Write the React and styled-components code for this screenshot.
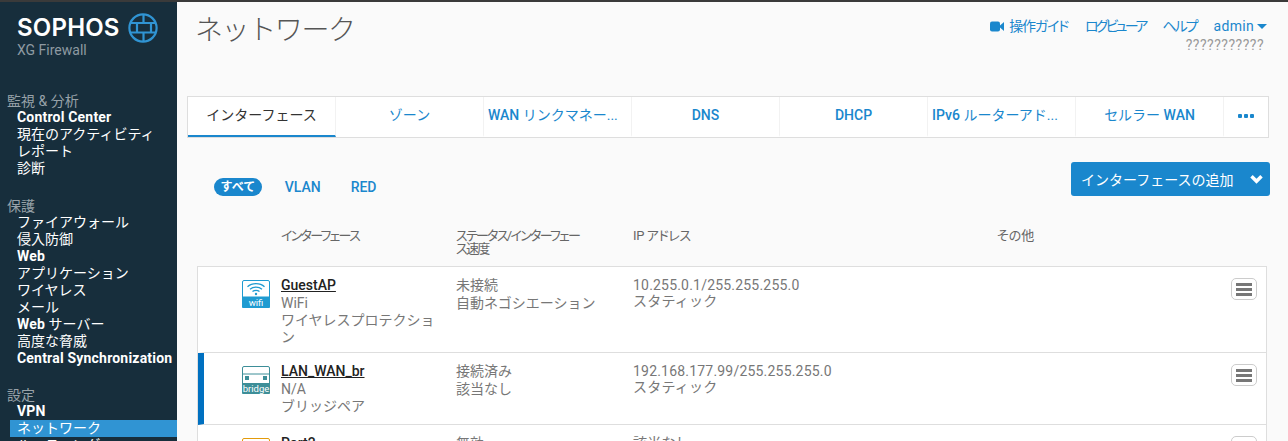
import styled, { createGlobalStyle } from "styled-components";

const sansJa = `Roboto, "Noto Sans CJK JP", sans-serif`;

const sideGroups = [
  {
    title: "監視 & 分析",
    items: [["Control Center"], ["", "現在のアクティビティ"], ["", "レポート"], ["", "診断"]],
  },
  {
    title: "保護",
    items: [["", "ファイアウォール"], ["", "侵入防御"], ["Web"], ["", "アプリケーション"], ["", "ワイヤレス"], ["", "メール"], ["Web", " サーバー"], ["", "高度な脅威"], ["Central Synchronization"]],
  },
  {
    title: "設定",
    items: [["VPN"], ["", "ネットワーク"], ["", "ルーティング"]],
  },
];

const tabs = [
  { rest: "インターフェース" },
  { rest: "ゾーン" },
  { latin: "WAN", rest: " リンクマネー...", clipped: true },
  { latin: "DNS" },
  { latin: "DHCP" },
  { latin: "IPv6", rest: " ルーターアド...", clipped: true },
  { rest: "セルラー ", tail: "WAN" },
];

const topLinks = [
  { label: "ログビューア", spacing: -2.8 },
  { label: "ヘルプ", spacing: -2 },
];

const rows = [
  {
    name: "GuestAP",
    kind: "wifi",
    info: ["WiFi", "ワイヤレスプロテクション"],
    status: ["未接続", "自動ネゴシエーション"],
    ip: ["10.255.0.1/255.255.255.0", "スタティック"],
    height: 86,
  },
  {
    name: "LAN_WAN_br",
    kind: "bridge",
    active: true,
    info: ["N/A", "ブリッジペア"],
    status: ["接続済み", "該当なし"],
    ip: ["192.168.177.99/255.255.255.0", "スタティック"],
    height: 72,
  },
  {
    name: "Port2",
    kind: "port",
    info: ["イーサネット"],
    status: ["無効", "自動ネゴシエーション"],
    ip: ["該当なし"],
    height: 72,
  },
];

export default function App() {
  return (
    <Page>
      <GlobalStyle />
      <Sidebar>
        <LogoBlock>
          <LogoLine>
            <LogoText>SOPHOS</LogoText>
            <LogoMark />
          </LogoLine>
          <Product>XG Firewall</Product>
        </LogoBlock>
        {sideGroups.map((group) => (
          <SideGroup key={group.title}>
            <GroupTitle>{group.title}</GroupTitle>
            {group.items.map(([latin, rest]) => (
              <SideItem key={latin + rest} $active={rest === "ネットワーク"}>
                {latin && <b>{latin}</b>}
                {rest}
              </SideItem>
            ))}
          </SideGroup>
        ))}
      </Sidebar>
      <Main>
        <Header>
          <PageTitle>ネットワーク</PageTitle>
          <HeaderRight>
            <TopLinks>
              <TopLink $spacing={-1.2}>
                <CameraIcon />
                操作ガイド
              </TopLink>
              {topLinks.map((link) => (
                <TopLink key={link.label} $spacing={link.spacing}>{link.label}</TopLink>
              ))}
              <Admin>admin<Caret /></Admin>
            </TopLinks>
            <Unknown>???????????</Unknown>
          </HeaderRight>
        </Header>
        <TabBar>
          {tabs.map((tab, i) => (
            <Tab key={i} $active={i === 0} $clipped={tab.clipped}>
              {tab.latin && <b>{tab.latin}</b>}
              {tab.rest}
              {tab.tail && <b>{tab.tail}</b>}
            </Tab>
          ))}
          <MoreTab><i /><i /><i /></MoreTab>
        </TabBar>
        <FilterRow>
          <Filters>
            <Pill>すべて</Pill>
            <FilterLink>VLAN</FilterLink>
            <FilterLink>RED</FilterLink>
          </Filters>
          <AddButton>
            インターフェースの追加
            <Chevron />
          </AddButton>
        </FilterRow>
        <ColumnHead>
          <HeadName>インターフェース</HeadName>
          <HeadStatus>ステータス/インターフェース速度</HeadStatus>
          <HeadIp>IP アドレス</HeadIp>
          <div>その他</div>
        </ColumnHead>
        <Table>
          {rows.map((row) => (
            <Row key={row.name} $active={row.active} $height={row.height}>
              <IconCell>
                <InterfaceIcon kind={row.kind} />
              </IconCell>
              <NameCell>
                <RowName>{row.name}</RowName>
                {row.info.map((line) => <div key={line}>{line}</div>)}
              </NameCell>
              <StatusCell>
                {row.status.map((line) => <div key={line}>{line}</div>)}
              </StatusCell>
              <IpCell>
                {row.ip.map((line) => <div key={line}>{line}</div>)}
              </IpCell>
              <MenuButton><i /><i /><i /></MenuButton>
            </Row>
          ))}
        </Table>
      </Main>
    </Page>
  );
}

function LogoMark() {
  return (
    <svg width="30" height="30" viewBox="0 0 30 30" fill="none" stroke="#3094d3" strokeWidth="2.200">
      <circle cx="15" cy="15" r="13.600" />
      <path d="M3 10h24M3 19.500h24M9 10v9.500M23 10v9.500M15.500 2v8M15.500 19.500v8.500" />
    </svg>
  );
}

function CameraIcon() {
  return (
    <svg width="14" height="11" viewBox="0 0 14 11" fill="#1a87cd">
      <rect x="0" y="0.500" width="10" height="10" rx="2" />
      <path d="M10 4.500 14 1v9l-4-3.500z" />
    </svg>
  );
}

function Caret() {
  return (
    <svg width="10" height="5" viewBox="0 0 10 5" fill="#1a87cd">
      <path d="M0 0h10L5 5z" />
    </svg>
  );
}

function Chevron() {
  return (
    <svg width="13" height="10" viewBox="0 0 14 11" fill="none" stroke="#fff" strokeWidth="3.800">
      <path d="M1.500 2.500 7 8 12.500 2.500" />
    </svg>
  );
}

function InterfaceIcon({ kind }) {
  if (kind === "wifi") {
    return (
      <svg width="28" height="28" viewBox="0 0 28 28">
        <rect x="0.500" y="0.500" width="27" height="27" rx="1.500" fill="#fff" stroke="#1f9bd1" />
        <rect x="0" y="16.500" width="28" height="11.500" rx="1" fill="#1f9bd1" />
        <g fill="none" stroke="#1f9bd1" strokeWidth="1.300">
          <path d="M5.500 6.800c4.500-4.200 12.500-4.200 17 0" />
          <path d="M8 9.200c3.300-2.800 8.700-2.800 12 0" />
          <path d="M10.500 11.600c1.900-1.500 5.100-1.500 7 0" />
        </g>
        <circle cx="14" cy="14" r="1.200" fill="#1f9bd1" />
        <IconLabel x="14" y="25.500" fontSize="9.500">wifi</IconLabel>
      </svg>
    );
  }
  if (kind === "bridge") {
    return (
      <svg width="28" height="28" viewBox="0 0 28 28">
        <rect x="0.500" y="0.500" width="27" height="27" rx="1.500" fill="#fff" stroke="#3d8e98" />
        <path d="M1 8h26" stroke="#3d8e98" strokeWidth="1" />
        <rect x="3" y="10" width="4" height="4" fill="#3d8e98" />
        <rect x="21" y="10" width="4" height="4" fill="#3d8e98" />
        <rect x="0" y="17" width="28" height="11" rx="1" fill="#3d8e98" />
        <IconLabel x="14" y="25.500" fontSize="9.500">bridge</IconLabel>
      </svg>
    );
  }
  return (
    <svg width="28" height="28" viewBox="0 0 28 28">
      <rect x="0.500" y="0.500" width="27" height="27" rx="1.500" fill="#fff" stroke="#e39b0b" />
      <rect x="10" y="3" width="8" height="4" fill="#e39b0b" />
    </svg>
  );
}

const GlobalStyle = createGlobalStyle`
  html, body {
    margin: 0;
    height: 441px;
    overflow: hidden;
    background: #fafafa;
  }
`;

const IconLabel = styled.text.attrs({ textAnchor: "middle" })`
  font-family: Roboto, sans-serif;
  fill: #fff;
`;

const Page = styled.div`
  width: 1288px;
  height: 441px;
  overflow: hidden;
  display: flex;
  border-top: 2px solid #3a3a3a;
  box-sizing: border-box;
  background: #fafafa;
  font-family: ${sansJa};
`;

const Sidebar = styled.nav`
  width: 177px;
  flex-shrink: 0;
  background: #172e3c;
  color: #fff;
  box-sizing: border-box;
`;

const LogoBlock = styled.div`
  padding: 11px 0 0 17px;
  height: 80px;
  box-sizing: border-box;
`;

const LogoLine = styled.div`
  display: flex;
  align-items: center;
  gap: 8px;
`;

const LogoText = styled.div`
  font-family: Inter, sans-serif;
  font-size: 24px;
  line-height: 30px;
  font-weight: 600;
  letter-spacing: 0.2px;
  color: #fff;
`;

const Product = styled.div`
  font-size: 14px;
  line-height: 16px;
  margin-top: -1px;
  color: #8e9aa2;
`;

const SideGroup = styled.section`
  margin: 11px 0 20px;

  &:first-of-type {
    margin-bottom: 21px;
  }
`;

const GroupTitle = styled.div`
  padding-left: 7px;
  font-size: 14px;
  line-height: 16px;
  color: #98a2a9;
`;

const SideItem = styled.div`
  margin-left: 10px;
  padding-left: 7px;
  font-size: 14px;
  line-height: 17px;
  white-space: nowrap;
  color: #fff;
  background: ${(props) => (props.$active ? "#3094d3" : "transparent")};

  b {
    font-weight: 700;
    letter-spacing: 0.2px;
  }
`;

const Main = styled.main`
  flex: 1;
  min-width: 0;
  padding-left: 10px;
  padding-right: 19px;
`;

const Header = styled.header`
  display: flex;
  justify-content: space-between;
  height: 94px;
`;

const PageTitle = styled.h1`
  margin: 11px 0 0 8px;
  font-size: 28px;
  line-height: 36px;
  font-weight: 300;
  letter-spacing: -1.400px;
  color: #555;
`;

const HeaderRight = styled.div`
  padding: 14px 2px 0 0;
  display: flex;
  flex-direction: column;
  align-items: flex-end;
`;

const TopLinks = styled.div`
  display: flex;
  align-items: center;
  gap: 17px;
  font-size: 14px;
  line-height: 20px;
  color: #1a87cd;
`;

const TopLink = styled.span`
  display: flex;
  align-items: center;
  gap: 5px;
  font-feature-settings: "palt";
  letter-spacing: ${(props) => props.$spacing}px;
`;

const Admin = styled.span`
  display: flex;
  align-items: center;
  gap: 3px;
  letter-spacing: 0.3px;
`;

const Unknown = styled.div`
  font-size: 14px;
  line-height: 16px;
  margin-top: 1px;
  letter-spacing: 0.5px;
  color: #999;
  padding-right: 3px;
`;

const TabBar = styled.div`
  height: 42px;
  box-sizing: border-box;
  display: flex;
  border: 1px solid #dedede;
  background: #fff;
`;

const Tab = styled.div`
  width: 148px;
  flex-shrink: 0;
  box-sizing: border-box;
  padding: 0 4px;
  font-size: 14px;
  line-height: 37px;
  white-space: nowrap;
  overflow: hidden;
  text-align: ${(props) => (props.$clipped ? "left" : "center")};
  color: ${(props) => (props.$active ? "#333" : "#1a87cd")};
  border-right: 1px solid #f2f2f2;
  border-bottom: 2px solid ${(props) => (props.$active ? "#1a87cd" : "transparent")};

  b {
    font-weight: 500;
  }
`;

const MoreTab = styled.div`
  flex: 1;
  display: flex;
  align-items: center;
  justify-content: center;
  gap: 2px;
  padding-bottom: 2px;

  i {
    display: block;
    width: 4px;
    height: 4px;
    border-radius: 1px;
    background: #1a87cd;
  }
`;

const FilterRow = styled.div`
  display: flex;
  justify-content: space-between;
  align-items: flex-start;
  padding-top: 24px;
  height: 78px;
  box-sizing: border-box;
  margin-right: -1px;
`;

const Filters = styled.div`
  display: flex;
  align-items: center;
  gap: 23px;
  padding: 16px 0 0 27px;
`;

const Pill = styled.span`
  background: #1a87cd;
  color: #fff;
  font-size: 12px;
  font-weight: 700;
  line-height: 18px;
  padding: 0 6.500px;
  border-radius: 9px;
`;

const FilterLink = styled.span`
  color: #1a87cd;
  font-size: 14px;
  line-height: 18px;
  font-weight: 500;

  & + & {
    margin-left: 7px;
  }
`;

const AddButton = styled.div`
  width: 199px;
  height: 34px;
  box-sizing: border-box;
  background: #1a87cd;
  color: #fff;
  font-size: 14px;
  border-radius: 3px;
  display: flex;
  align-items: center;
  justify-content: space-between;
  padding: 0 7px 0 10px;
`;

const ColumnHead = styled.div`
  display: flex;
  height: 50px;
  box-sizing: border-box;
  padding-top: 13px;
  font-size: 13px;
  line-height: 13px;
  color: #666;
  font-feature-settings: "palt";
`;

const HeadName = styled.div`
  width: 175px;
  margin-left: 94px;
  letter-spacing: -1.700px;
`;

const HeadStatus = styled.div`
  width: 130px;
  margin-right: 47px;
  letter-spacing: -1.700px;
`;

const HeadIp = styled.div`
  width: 364px;
  letter-spacing: -0.4px;
`;

const Table = styled.div`
  margin: 0 2px 0 10px;
  border: 1px solid #dedede;
  border-bottom: none;
  background: #fff;
`;

const Row = styled.div`
  height: ${(props) => props.$height}px;
  box-sizing: border-box;
  display: flex;
  position: relative;
  padding-top: 8px;
  border-bottom: 1px solid #dedede;
  border-left: 6px solid ${(props) => (props.$active ? "#0070c0" : "transparent")};
  font-size: 14px;
  line-height: 17px;
  color: #777;
`;

const IconCell = styled.div`
  width: 39px;
  margin-left: 38px;
  padding-top: 5px;
  line-height: 0;
`;

const NameCell = styled.div`
  width: 156px;
  margin-right: 19px;
`;

const RowName = styled.div`
  color: #222;
  text-decoration: underline;
  font-weight: 500;
  margin: 2px 0 1px;
`;

const StatusCell = styled.div`
  width: 177px;
  padding-top: 1px;
  line-height: 18px;
`;

const IpCell = styled.div`
  flex: 1;
  padding-top: 2px;
  line-height: 16px;
  letter-spacing: 0.2px;
`;

const MenuButton = styled.div`
  position: absolute;
  top: 11px;
  right: 9px;
  width: 26px;
  height: 22px;
  box-sizing: border-box;
  border: 1px solid #ccc;
  border-radius: 5px;
  display: flex;
  flex-direction: column;
  align-items: center;
  justify-content: center;
  gap: 2px;

  i {
    display: block;
    width: 16px;
    height: 3px;
    background: #777;
  }
`;
